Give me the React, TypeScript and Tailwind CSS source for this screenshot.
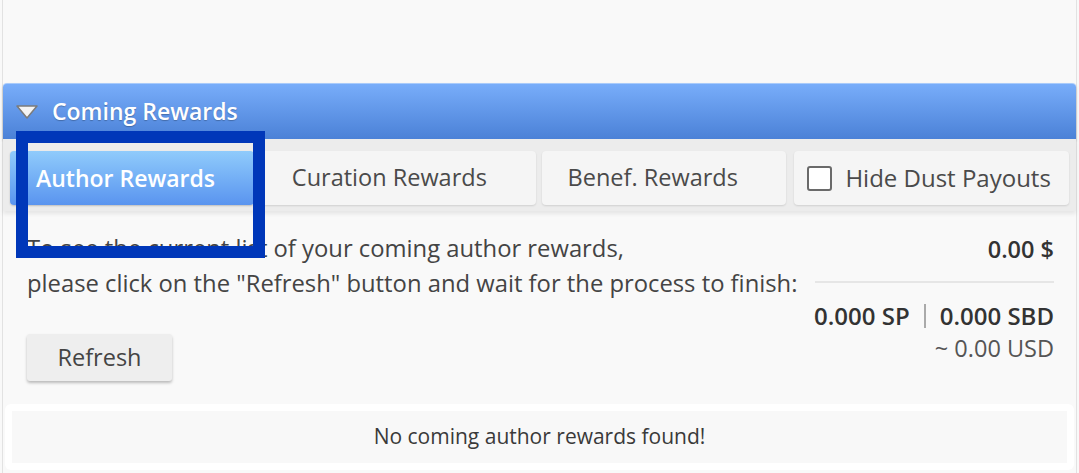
import React from "react";

const tabs = [
  { label: "Curation Rewards", w: "w-[279px]", ml: "ml-[4px]", pl: "pl-[34px]" },
  { label: "Benef. Rewards", w: "w-[246px]", ml: "ml-[6px]", pl: "pl-[26px]" },
];

const App = () => {
  return (
    <div
      className="relative w-[1079px] h-[473px] overflow-hidden bg-[#f9f9f9] text-[#444]"
      style={{ fontFamily: '"Open Sans", "Noto Sans", sans-serif' }}
    >
      <div className="mx-[2px] h-full border-x border-[#e2e2e2] flex flex-col">
        <div className="h-[83px] shrink-0" />

        {/* panel header */}
        <div className="h-[56px] shrink-0 rounded-t-[4px] border-t border-[#a9cbfb] bg-gradient-to-b from-[#78adfa] to-[#4b81d7] flex items-center pl-[12px] shadow-[0_2px_3px_rgba(0,0,0,0.25)]">
          <svg width="24" height="16" viewBox="0 0 24 16" className="mr-[13px]">
            <path
              d="M2 2 L22 2 L12 14 Z"
              fill="#f4f4f4"
              stroke="#7b7b7b"
              strokeWidth="1.5"
              strokeLinejoin="round"
            />
          </svg>
          <span className="text-white text-[23px] font-semibold [text-shadow:0_1px_1px_rgba(0,0,0,0.25)]">
            Coming Rewards
          </span>
        </div>

        {/* tabs */}
        <div className="h-[72px] shrink-0 bg-[#ececec] flex items-start pt-[12px] px-[7px] shadow-[0_3px_4px_rgba(0,0,0,0.08)]">
          <div className="w-[245px] h-[54px] rounded-[4px] bg-gradient-to-b from-[#90cbfb] to-[#5a94ef] flex items-center pl-[26px] text-white text-[23px] font-semibold shadow-[0_1px_2px_rgba(0,0,0,0.2)]">
            Author Rewards
          </div>
          {tabs.map((t) => (
            <div
              key={t.label}
              className={`${t.w} ${t.ml} ${t.pl} h-[54px] rounded-[4px] bg-[#f5f5f5] flex items-center text-[23.5px] text-[#4a4a4a] shadow-[0_1px_2px_rgba(0,0,0,0.12)]`}
            >
              {t.label}
            </div>
          ))}
          <div className="w-[276px] ml-[8px] h-[54px] rounded-[4px] bg-[#f5f5f5] flex items-center pl-[13px] text-[24px] text-[#4a4a4a] shadow-[0_1px_2px_rgba(0,0,0,0.12)]">
            <span className="w-[25px] h-[25px] border-[2px] border-[#6a6a6a] rounded-[3px] mr-[13px] bg-white" />
            Hide Dust Payouts
          </div>
        </div>

        {/* info */}
        <div className="flex justify-between pl-[24px] pr-[22px] pt-[20px]">
          <div className="whitespace-nowrap">
            <p className="text-[23.8px] leading-[35px] text-[#444]">
              To see the current list of your coming author rewards,
              <br />
              please click on the "Refresh" button and wait for the process to finish:
            </p>
            <button className="mt-[33px] w-[145px] h-[47px] rounded-[3px] bg-[#eeeeee] text-[23.5px] text-[#444] shadow-[0_2px_3px_rgba(0,0,0,0.25)]">
              Refresh
            </button>
          </div>
          <div className="w-[239px] shrink-0 whitespace-nowrap flex flex-col items-end text-[23.5px] leading-[33px] pt-[2px]">
            <div className="font-semibold text-[#333]">0.00 $</div>
            <div className="w-full h-[2px] bg-[#e6e6e6] mt-[15px] mb-[16px]" />
            <div className="font-semibold text-[24px] text-[#333] flex items-center">
              0.000 SP
              <span className="mx-[14px] w-[2px] h-[24px] bg-[#aaa]" />
              0.000 SBD
            </div>
            <div className="text-[#555]">~ 0.00 USD</div>
          </div>
        </div>

        {/* empty result */}
        <div className="mt-[23px] mx-[2px] rounded-[6px] bg-white p-[7px] shrink-0">
          <div className="h-[52px] bg-[#f8f8f8] flex items-center justify-center text-[21px] text-[#3a3a3a]">
            No coming author rewards found!
          </div>
        </div>
      </div>

      {/* annotation highlight */}
      <div className="absolute left-[16px] top-[131px] w-[249px] h-[127px] border-[12px] border-[#0037b9]" />
    </div>
  );
};

export default App;
